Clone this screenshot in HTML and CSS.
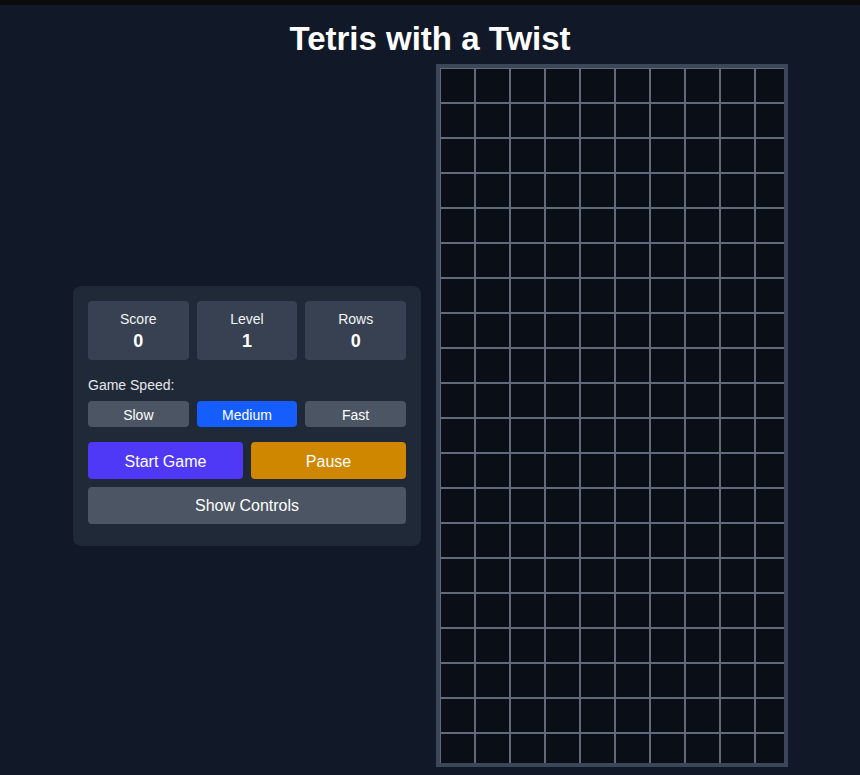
FILE: index.html
```html
<!DOCTYPE html>
<html lang="en">
<head>
<meta charset="utf-8">
<title>Tetris with a Twist</title>
<link rel="stylesheet" href="styles.css">
</head>
<body>
<div class="topbar"></div>
<h1 class="title">Tetris with a Twist</h1>
<main class="game">
  <section class="panel">
    <div class="stats">
      <div class="stat"><div class="stat-label">Score</div><div class="stat-value">0</div></div>
      <div class="stat"><div class="stat-label">Level</div><div class="stat-value">1</div></div>
      <div class="stat"><div class="stat-label">Rows</div><div class="stat-value">0</div></div>
    </div>
    <div class="speed-label">Game Speed:</div>
    <div class="speeds">
      <button class="speed">Slow</button>
      <button class="speed active">Medium</button>
      <button class="speed">Fast</button>
    </div>
    <div class="actions">
      <button class="btn start">Start Game</button>
      <button class="btn pause">Pause</button>
    </div>
    <button class="btn controls">Show Controls</button>
  </section>
  <div class="board">
    <div class="cell"></div><div class="cell"></div><div class="cell"></div><div class="cell"></div><div class="cell"></div><div class="cell"></div><div class="cell"></div><div class="cell"></div><div class="cell"></div><div class="cell"></div>
    <div class="cell"></div><div class="cell"></div><div class="cell"></div><div class="cell"></div><div class="cell"></div><div class="cell"></div><div class="cell"></div><div class="cell"></div><div class="cell"></div><div class="cell"></div>
    <div class="cell"></div><div class="cell"></div><div class="cell"></div><div class="cell"></div><div class="cell"></div><div class="cell"></div><div class="cell"></div><div class="cell"></div><div class="cell"></div><div class="cell"></div>
    <div class="cell"></div><div class="cell"></div><div class="cell"></div><div class="cell"></div><div class="cell"></div><div class="cell"></div><div class="cell"></div><div class="cell"></div><div class="cell"></div><div class="cell"></div>
    <div class="cell"></div><div class="cell"></div><div class="cell"></div><div class="cell"></div><div class="cell"></div><div class="cell"></div><div class="cell"></div><div class="cell"></div><div class="cell"></div><div class="cell"></div>
    <div class="cell"></div><div class="cell"></div><div class="cell"></div><div class="cell"></div><div class="cell"></div><div class="cell"></div><div class="cell"></div><div class="cell"></div><div class="cell"></div><div class="cell"></div>
    <div class="cell"></div><div class="cell"></div><div class="cell"></div><div class="cell"></div><div class="cell"></div><div class="cell"></div><div class="cell"></div><div class="cell"></div><div class="cell"></div><div class="cell"></div>
    <div class="cell"></div><div class="cell"></div><div class="cell"></div><div class="cell"></div><div class="cell"></div><div class="cell"></div><div class="cell"></div><div class="cell"></div><div class="cell"></div><div class="cell"></div>
    <div class="cell"></div><div class="cell"></div><div class="cell"></div><div class="cell"></div><div class="cell"></div><div class="cell"></div><div class="cell"></div><div class="cell"></div><div class="cell"></div><div class="cell"></div>
    <div class="cell"></div><div class="cell"></div><div class="cell"></div><div class="cell"></div><div class="cell"></div><div class="cell"></div><div class="cell"></div><div class="cell"></div><div class="cell"></div><div class="cell"></div>
    <div class="cell"></div><div class="cell"></div><div class="cell"></div><div class="cell"></div><div class="cell"></div><div class="cell"></div><div class="cell"></div><div class="cell"></div><div class="cell"></div><div class="cell"></div>
    <div class="cell"></div><div class="cell"></div><div class="cell"></div><div class="cell"></div><div class="cell"></div><div class="cell"></div><div class="cell"></div><div class="cell"></div><div class="cell"></div><div class="cell"></div>
    <div class="cell"></div><div class="cell"></div><div class="cell"></div><div class="cell"></div><div class="cell"></div><div class="cell"></div><div class="cell"></div><div class="cell"></div><div class="cell"></div><div class="cell"></div>
    <div class="cell"></div><div class="cell"></div><div class="cell"></div><div class="cell"></div><div class="cell"></div><div class="cell"></div><div class="cell"></div><div class="cell"></div><div class="cell"></div><div class="cell"></div>
    <div class="cell"></div><div class="cell"></div><div class="cell"></div><div class="cell"></div><div class="cell"></div><div class="cell"></div><div class="cell"></div><div class="cell"></div><div class="cell"></div><div class="cell"></div>
    <div class="cell"></div><div class="cell"></div><div class="cell"></div><div class="cell"></div><div class="cell"></div><div class="cell"></div><div class="cell"></div><div class="cell"></div><div class="cell"></div><div class="cell"></div>
    <div class="cell"></div><div class="cell"></div><div class="cell"></div><div class="cell"></div><div class="cell"></div><div class="cell"></div><div class="cell"></div><div class="cell"></div><div class="cell"></div><div class="cell"></div>
    <div class="cell"></div><div class="cell"></div><div class="cell"></div><div class="cell"></div><div class="cell"></div><div class="cell"></div><div class="cell"></div><div class="cell"></div><div class="cell"></div><div class="cell"></div>
    <div class="cell"></div><div class="cell"></div><div class="cell"></div><div class="cell"></div><div class="cell"></div><div class="cell"></div><div class="cell"></div><div class="cell"></div><div class="cell"></div><div class="cell"></div>
    <div class="cell"></div><div class="cell"></div><div class="cell"></div><div class="cell"></div><div class="cell"></div><div class="cell"></div><div class="cell"></div><div class="cell"></div><div class="cell"></div><div class="cell"></div>
  </div>
</main>
</body>
</html>
```
FILE: styles.css
```css
* { box-sizing: border-box; }

html, body {
  margin: 0;
  padding: 0;
  background: #111827;
  color: #ffffff;
  font-family: "Liberation Sans", Arial, sans-serif;
}

body {
  height: 775px;
  overflow: hidden;
}

.topbar {
  height: 5px;
  background: #0a0a0a;
}

.title {
  margin: 15px 0 6px;
  font-size: 33px;
  line-height: 38px;
  font-weight: 700;
  text-align: center;
  color: #ffffff;
}

.game {
  display: flex;
  justify-content: center;
  align-items: center;
  gap: 15px;
  padding-left: 1px;
}

.panel {
  width: 348px;
  padding: 15px 15px 22px;
  background: #1f2937;
  border-radius: 8px;
}

.stats {
  display: grid;
  grid-template-columns: repeat(3, 1fr);
  gap: 8px;
}

.stat {
  background: #374151;
  border-radius: 4px;
  padding: 10px 0 8px;
  text-align: center;
}

.stat-label {
  font-size: 14px;
  line-height: 16px;
  color: #f3f4f6;
}

.stat-value {
  margin-top: 4px;
  font-size: 18px;
  line-height: 21px;
  font-weight: 700;
  color: #ffffff;
}

.speed-label {
  margin-top: 17px;
  font-size: 14px;
  line-height: 16px;
  color: #e5e7eb;
}

.speeds {
  margin-top: 8px;
  display: grid;
  grid-template-columns: repeat(3, 1fr);
  gap: 8px;
}

button {
  font-family: "Liberation Sans", Arial, sans-serif;
  color: #ffffff;
  border: none;
  cursor: pointer;
  padding: 0;
}

.speed {
  height: 26px;
  padding-top: 2px;
  font-size: 14px;
  background: #4b5563;
  border-radius: 4px;
}

.speed.active {
  background: #155dfc;
}

.actions {
  margin-top: 15px;
  display: grid;
  grid-template-columns: 1fr 1fr;
  gap: 8px;
}

.btn {
  height: 37px;
  padding-top: 3px;
  font-size: 16px;
  border-radius: 4px;
}

.start { background: #4f39f6; }
.pause { background: #d08700; }

.controls {
  display: block;
  width: 100%;
  margin-top: 8px;
  padding-top: 2px;
  background: #4b5563;
}

.board {
  width: 352px;
  height: 703px;
  border: 4px solid #3b4658;
  background: #0a0e16;
  overflow: hidden;
  display: grid;
  grid-template-columns: repeat(10, 35px);
  grid-auto-rows: 35px;
}

.cell {
  border: 1px solid #626a79;
  background: #0a0e16;
}
```
